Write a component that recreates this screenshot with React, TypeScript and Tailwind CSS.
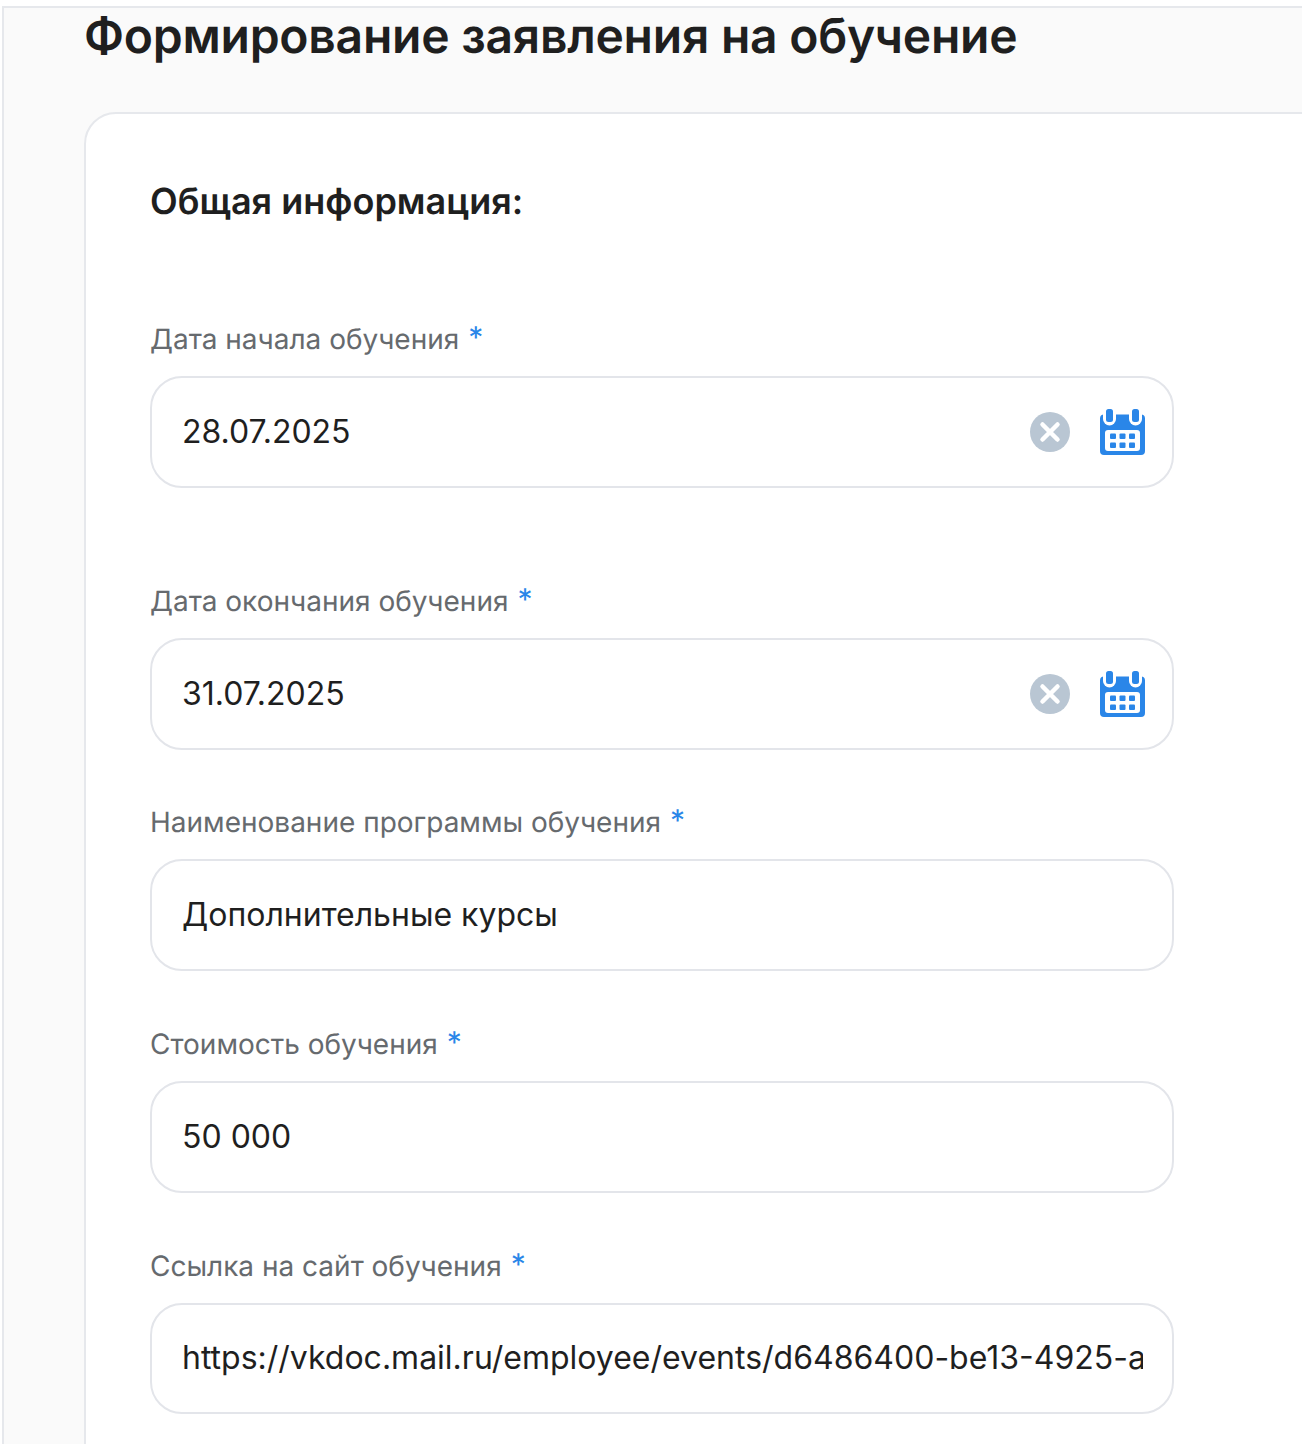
import React from 'react';

const Calendar = () => (
  <svg width="45" height="46" viewBox="0 0 45 46" className="shrink-0">
    <path
      fillRule="evenodd"
      fill="#2a86e8"
      d="M4 5.5h37a4 4 0 0 1 4 4V42a4 4 0 0 1-4 4H4a4 4 0 0 1-4-4V9.5a4 4 0 0 1 4-4zM8 21a3 3 0 0 0-3 3v15a3 3 0 0 0 3 3h29a3 3 0 0 0 3-3V24a3 3 0 0 0-3-3z"
    />
    <rect x="3" y="-2" width="13" height="18.5" rx="6.5" fill="#fff" />
    <rect x="29" y="-2" width="13" height="18.5" rx="6.5" fill="#fff" />
    <rect x="6" y="0" width="7" height="13" rx="2.5" fill="#2a86e8" />
    <rect x="32" y="0" width="7" height="13" rx="2.5" fill="#2a86e8" />
    {[10, 19.5, 29].map((x) => (
      <React.Fragment key={x}>
        <rect x={x} y="24.5" width="6" height="5.5" rx="1" fill="#2a86e8" />
        <rect x={x} y="33.5" width="6" height="5.5" rx="1" fill="#2a86e8" />
      </React.Fragment>
    ))}
  </svg>
);

const Clear = () => (
  <svg width="40" height="40" viewBox="0 0 40 40" className="shrink-0">
    <circle cx="20" cy="20" r="20" fill="#b9c6d3" />
    <path d="M12.5 12.5l15 15M27.5 12.5l-15 15" stroke="#fff" strokeWidth="4.5" strokeLinecap="round" />
  </svg>
);

const Field = ({ label, value, date, className = '' }: { label: string; value: string; date?: boolean; className?: string }) => (
  <div className={className}>
    <div className="flex items-start h-[36px] mb-[19px] text-[28px] leading-[36px] text-[#666a6e]">
      <span>{label}</span>
      <span className="ml-[9px] text-[30px] leading-[34px] text-[#2a86e8]">*</span>
    </div>
    <div className="flex items-center h-[111.5px] rounded-[32px] border-2 border-[#e3e5ea] bg-white pl-[30px] pr-[29px]">
      <input
        readOnly
        value={value}
        className="flex-1 min-w-0 bg-transparent outline-none text-[32px] leading-[40px] text-[#1f1f1f]"
      />
      {date && (
        <div className="flex items-center gap-[30px] ml-[20px] -mr-[2px]">
          <Clear />
          <Calendar />
        </div>
      )}
    </div>
  </div>
);

export default function App() {
  return (
    <div className="h-[1444px] overflow-hidden bg-white pt-[6px] pl-[2px] font-['Inter',sans-serif] [text-rendering:geometricPrecision] antialiased">
      <div className="h-full border-t-2 border-l-2 border-[#e6e8ec] bg-[#fafafa] pl-[80px]">
        <h1 className="h-[56px] text-[48px] leading-[56px] tracking-[-0.24px] font-semibold text-[#1f1f1f]">
          Формирование заявления на обучение
        </h1>
        <div className="mt-[48px] w-[1400px] h-[1500px] rounded-tl-[32px] border-2 border-[#e6e8ec] bg-white pl-[64px] pt-[65px]">
          <h2 className="h-[44px] text-[36px] leading-[44px] font-semibold text-[#1f1f1f]">Общая информация:</h2>
          <div className="w-[1024px] mt-[98px] flex flex-col">
            <Field label="Дата начала обучения" value="28.07.2025" date />
            <Field label="Дата окончания обучения" value="31.07.2025" date className="mt-[95.5px]" />
            <Field label="Наименование программы обучения" value="Дополнительные курсы" className="mt-[54.5px]" />
            <Field label="Стоимость обучения" value="50 000" className="mt-[55.5px]" />
            <Field label="Ссылка на сайт обучения" value="https://vkdoc.mail.ru/employee/events/d6486400-be13-4925-a" className="mt-[55px]" />
          </div>
        </div>
      </div>
    </div>
  );
}
